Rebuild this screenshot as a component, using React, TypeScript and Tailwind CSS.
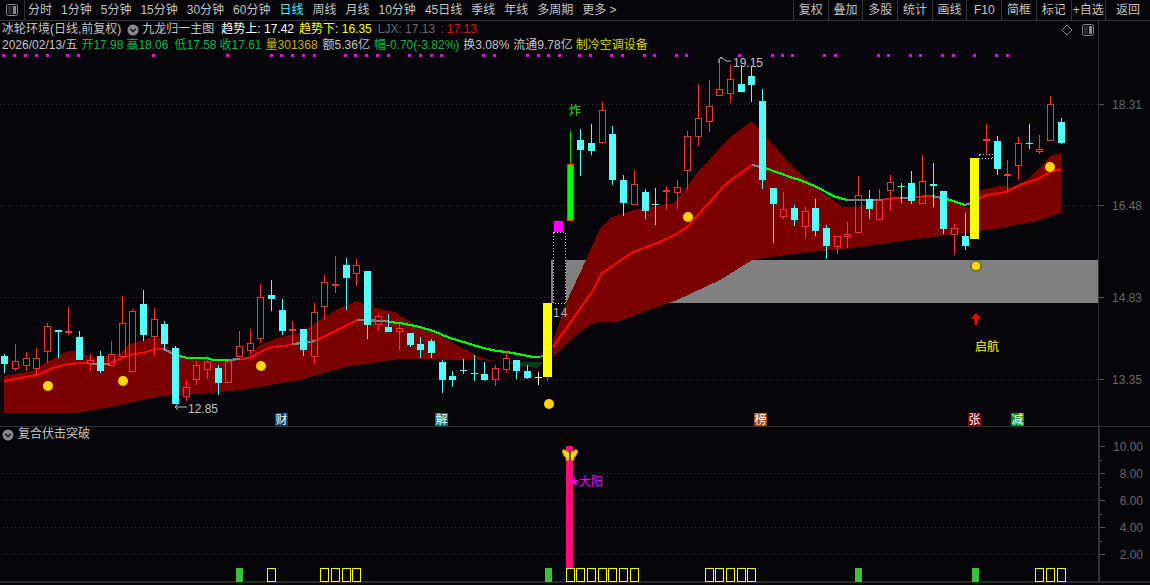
import React from 'react';

const FONT = "font-['Liberation_Sans','Noto_Sans_CJK_SC',sans-serif]";

const periods: [string, boolean?][] = [
  ['分时'], ['1分钟'], ['5分钟'], ['15分钟'], ['30分钟'], ['60分钟'], ['日线', true],
  ['周线'], ['月线'], ['10分钟'], ['45日线'], ['季线'], ['年线'], ['多周期'], ['更多 >'],
];
const tools = ['复权', '叠加', '多股', '统计', '画线', 'F10', '简框', '标记', '+自选'];

type Candle = [number, number, number, number, 'r' | 'c' | 'w' | 'y' | 'm' | 'g'];

// high, body top, body bottom, low, kind -- page y coordinates
const candles: Candle[] = [
  [354, 356, 364, 373, 'c'], [344, 361, 369, 371, 'r'], [352, 358, 366, 371, 'r'], [348, 358, 369, 377, 'r'],
  [323, 326, 352, 363, 'r'], [330, 330, 332, 358, 'c'], [307, 331, 333, 335, 'r'], [331, 337, 360, 360, 'c'],
  [354, 360, 364, 371, 'r'], [351, 356, 371, 373, 'c'], [341, 354, 366, 366, 'r'], [296, 323, 357, 357, 'r'],
  [309, 311, 372, 373, 'r'], [290, 304, 335, 341, 'c'], [308, 319, 337, 356, 'r'], [321, 324, 344, 350, 'c'],
  [346, 348, 404, 404, 'c'], [380, 387, 397, 401, 'r'], [361, 365, 380, 385, 'r'], [356, 361, 370, 379, 'r'],
  [365, 368, 383, 395, 'c'], [361, 361, 383, 383, 'r'], [331, 346, 357, 357, 'r'], [329, 343, 351, 354, 'r'],
  [284, 297, 339, 343, 'r'], [280, 295, 299, 311, 'c'], [299, 310, 331, 335, 'c'], [321, 329, 331, 344, 'r'],
  [329, 329, 350, 356, 'c'], [303, 312, 357, 364, 'r'], [275, 282, 307, 319, 'r'], [256, 284, 286, 293, 'r'],
  [258, 265, 278, 310, 'c'], [259, 265, 274, 286, 'r'], [271, 271, 325, 339, 'c'], [314, 316, 325, 331, 'r'],
  [314, 327, 332, 332, 'c'], [324, 328, 332, 350, 'r'], [333, 333, 345, 347, 'c'], [337, 344, 350, 358, 'c'],
  [339, 341, 353, 358, 'c'], [360, 362, 380, 393, 'c'], [371, 376, 380, 387, 'c'], [359, 370, 371, 374, 'c'],
  [355, 373, 374, 381, 'c'], [362, 374, 380, 381, 'c'], [365, 368, 380, 386, 'r'], [351, 358, 370, 373, 'r'],
  [360, 360, 371, 379, 'c'], [365, 371, 378, 379, 'c'], [372, 377, 378, 385, 'w'], [303, 303, 377, 381, 'y'],
  [221, 221, 232, 232, 'm'], [131, 164, 221, 221, 'g'], [129, 140, 150, 176, 'c'], [124, 143, 151, 155, 'c'],
  [102, 110, 143, 144, 'r'], [126, 134, 180, 185, 'c'], [175, 180, 203, 216, 'c'], [170, 184, 205, 205, 'r'],
  [189, 192, 211, 219, 'c'], [188, 204, 205, 225, 'c'], [186, 190, 192, 210, 'r'], [180, 187, 193, 209, 'r'],
  [131, 136, 171, 190, 'r'], [84, 118, 137, 146, 'r'], [80, 106, 122, 132, 'r'], [60, 89, 96, 96, 'r'],
  [65, 79, 94, 103, 'r'], [65, 84, 92, 92, 'c'], [66, 76, 85, 102, 'c'], [89, 101, 180, 189, 'c'],
  [188, 188, 204, 243, 'c'], [192, 209, 217, 219, 'r'], [205, 208, 220, 226, 'c'], [207, 211, 227, 238, 'r'],
  [199, 208, 231, 236, 'c'], [225, 228, 246, 259, 'c'], [236, 236, 247, 254, 'r'], [222, 234, 237, 248, 'r'],
  [176, 195, 233, 233, 'r'], [190, 199, 209, 219, 'c'], [189, 200, 220, 220, 'r'], [175, 182, 191, 211, 'r'],
  [183, 186, 187, 203, 'c'], [171, 183, 201, 204, 'c'], [155, 181, 204, 204, 'r'], [163, 184, 186, 207, 'c'],
  [191, 191, 229, 234, 'c'], [224, 228, 235, 255, 'r'], [213, 236, 246, 250, 'c'], [158, 158, 239, 239, 'y'],
  [124, 139, 141, 154, 'r'], [136, 141, 169, 175, 'c'], [160, 174, 176, 191, 'r'], [137, 143, 166, 180, 'r'],
  [124, 143, 144, 149, 'c'], [135, 149, 152, 154, 'r'], [96, 104, 141, 141, 'r'], [118, 122, 143, 144, 'c'],
];

const cx = (i: number) => Math.round(4.3 + 10.67 * i);

const pts = (p: number[][]) => p.map((a) => a.join(',')).join(' ');

const leftRibbon = [
  [4, 376], [20, 373], [33, 371], [45, 363], [60, 355], [68, 351], [75, 351], [85, 355], [100, 358], [120, 353], [130, 344],
  [150, 338], [160, 338], [170, 350], [185, 357], [205, 362], [225, 362], [245, 358], [260, 345], [280, 337], [300, 333],
  [320, 320], [340, 308], [357, 301], [372, 307], [395, 312], [415, 325], [430, 330], [445, 338], [460, 347], [480, 357],
  [490, 360], [505, 362], [505, 362], [480, 360], [400, 359], [350, 366], [320, 374], [300, 380], [270, 385], [240, 390],
  [200, 394], [160, 396], [130, 403], [100, 409], [75, 413], [4, 413],
];
const greenSliver = [[505, 362], [543, 362], [537, 368], [522, 366]];
const rightRibbon = [
  [553, 340], [563, 313], [566, 303], [586, 260], [600, 228], [610, 218], [633, 210], [673, 203], [678, 198], [697, 173],
  [730, 137], [752, 121], [763, 133], [793, 167], [810, 182], [823, 193], [843, 207], [857, 207], [880, 200], [907, 200],
  [933, 197], [947, 200], [963, 205], [971, 210], [980, 190], [1000, 186], [1012, 187], [1027, 180], [1040, 168], [1050, 156],
  [1061, 153], [1061, 213], [1033, 222], [1000, 228], [967, 233], [933, 237], [880, 244], [847, 249], [810, 252], [763, 258],
  [752, 260], [720, 280], [677, 300], [630, 317], [618, 322], [598, 322], [590, 325], [570, 340], [553, 358],
];

const lines: [string, number[][]][] = [
  ['#ff0000', [[4, 381], [20, 378], [37, 375], [53, 368], [68, 364], [80, 363], [90, 363]]],
  ['#808080', [[90, 364], [110, 364]]],
  ['#ff0000', [[110, 363], [133, 354], [143, 353], [155, 349], [163, 349]]],
  ['#808080', [[163, 349], [172, 353], [180, 356]]],
  ['#00ff00', [[180, 356], [187, 358], [207, 358], [213, 360], [228, 360]]],
  ['#808080', [[228, 360], [240, 359]]],
  ['#ff0000', [[240, 359], [250, 358], [260, 352], [272, 347], [292, 345]]],
  ['#808080', [[292, 344], [303, 343], [315, 341]]],
  ['#ff0000', [[315, 341], [340, 329], [357, 320]]],
  ['#808080', [[357, 320], [388, 321]]],
  ['#00ff00', [[388, 322], [400, 323], [420, 327], [433, 331], [450, 338], [470, 344], [483, 348], [497, 351], [507, 352], [523, 355], [533, 357], [540, 357]]],
  ['#808080', [[540, 357], [544, 355]]],
  ['#ff0000', [[553, 347], [572, 320], [592, 292], [602, 273], [633, 252], [657, 243], [675, 235], [687, 227], [727, 183], [752, 165]]],
  ['#808080', [[752, 165], [765, 168]]],
  ['#00ff00', [[765, 168], [793, 178], [800, 180], [817, 187], [833, 196], [847, 200]]],
  ['#808080', [[847, 200], [883, 200]]],
  ['#ff0000', [[883, 199], [900, 198]]],
  ['#808080', [[900, 198], [915, 198]]],
  ['#ff0000', [[915, 197], [932, 196]]],
  ['#808080', [[932, 196], [947, 199]]],
  ['#00ff00', [[947, 199], [965, 205]]],
  ['#808080', [[965, 205], [971, 203]]],
  ['#ff0000', [[971, 203], [980, 198], [987, 195], [1007, 192], [1020, 185], [1038, 179], [1050, 172], [1061, 169]]],
];

const coins = [[48, 386], [123, 381], [261, 366], [549, 404], [688, 217], [976, 266], [1050, 167]];

const magentaDots = [
  3, 14, 25, 36, 47, 67, 78, 153, 227, 271, 281, 292, 303, 314, 345, 355, 366, 377, 388, 409, 420, 431, 441, 483, 494, 527,
  538, 548, 559, 579, 590, 611, 622, 644, 654, 676, 686, 739, 772, 782, 792, 824, 835, 878, 888, 910, 920, 942, 953, 974,
  996, 1007,
];

const tags: [number, string, string][] = [
  [275, '财', '#0b3a6b'],
  [435, '解', '#0b6f68'],
  [754, '榜', '#a04a08'],
  [968, '张', '#800000'],
  [1011, '减', '#0a8a14'],
];

function CandleMark({ c, i }: { c: Candle; i: number }) {
  const [high, top, bottom, low, kind] = c;
  const x = cx(i);
  const left = x - 3;
  if (kind === 'y' || kind === 'm') {
    return (
      <>
        <rect x={x - 1} y={top} width={1} height={low - top} fill="#ff3232" />
        <rect x={x - 5} y={top} width={9} height={bottom - top} fill={kind === 'y' ? '#ffff00' : '#ff00ff'} />
      </>
    );
  }
  if (kind === 'g') {
    return (
      <>
        <rect x={x} y={high} width={1} height={top - high} fill="#00e000" />
        <rect x={left} y={top} width={7} height={bottom - top} fill="#ff3232" />
        <rect x={left + 1} y={top + 1} width={5} height={bottom - top - 2} fill="#00ff00" />
      </>
    );
  }
  const color = kind === 'r' ? '#ff3232' : kind === 'w' ? '#ffffff' : '#54ffff';
  const doji = bottom - top <= 1;
  return (
    <>
      <rect x={x} y={high} width={1} height={Math.max(top - high, 0)} fill={color} />
      <rect x={x} y={bottom} width={1} height={Math.max(low - bottom, 0)} fill={color} />
      {doji ? (
        <rect x={left} y={top} width={7} height={1} fill={color} />
      ) : kind === 'r' ? (
        <rect x={left + 0.5} y={top + 0.5} width={6} height={bottom - top - 1} fill="none" stroke={color} />
      ) : (
        <rect x={left} y={top} width={7} height={bottom - top} fill={color} />
      )}
    </>
  );
}

function Butterfly() {
  return (
    <g>
      <g stroke="#b87c18" strokeWidth="1" fill="#f4d818">
        <path d="M569.5 452.5 L564 449.5 L562 451 L564 456 L566 457.5 L566 460.5 L569.5 460 Z" />
        <path d="M570.5 452.5 L576 449.5 L578 451 L576 456 L574 457.5 L574 460.5 L570.5 460 Z" />
      </g>
      <rect x="569.5" y="451" width="1" height="9" fill="#2a1a08" />
    </g>
  );
}

function MainChart() {
  return (
    <svg viewBox="0 53 1098 373" width={1098} height={373} className={`block ${FONT}`}>
      {[104, 205, 297, 379].map((y) => (
        <line key={y} x1="0" x2="1098" y1={y + 0.5} y2={y + 0.5} stroke="#333333" strokeDasharray="1 3" />
      ))}
      <g shapeRendering="crispEdges">
        <rect x="551" y="260" width="547" height="43" fill="#808080" />
        <rect x="553" y="232" width="13" height="71" fill="#05050a" />
        <polygon points={pts(leftRibbon)} fill="#7a0000" />
        <polygon points={pts(greenSliver)} fill="#0f3b12" />
        <polygon points={pts(rightRibbon)} fill="#7a0000" />
        {lines.map(([color, p], i) => (
          <polyline key={i} points={pts(p)} fill="none" stroke={color} strokeWidth="2.2" />
        ))}
        {magentaDots.map((x) => (
          <rect key={x} x={x - 1} y={54} width={3} height={3} fill="#ff00ff" />
        ))}
        <rect x="553.5" y="232.5" width="12" height="71" fill="none" stroke="#d0d0d0" strokeDasharray="1 2" />
        <rect x="979.5" y="154.5" width="13" height="4" fill="none" stroke="#d0d0d0" strokeDasharray="1 2" />
        {candles.map((c, i) => (
          <CandleMark key={i} c={c} i={i} />
        ))}
      </g>
      {coins.map(([x, y]) => (
        <circle key={x} cx={x} cy={y} r={5} fill="#ffd700" stroke={y === 266 ? '#5a4a10' : 'none'} />
      ))}
      <path d="M976 313 l-5 6 h3.5 v6 h3 v-6 h3.5 z" fill="#ff0000" />
      <text x="569" y="115" fontSize="12" fill="#30e030">炸</text>
      <text x="553" y="317" fontSize="12" fill="#b0b0b0" letterSpacing="1">14</text>
      <text x="733" y="67" fontSize="12" fill="#c0c0c0">19.15</text>
      <path d="M719 63 v-4 l3 -2 M720 58 h2 l4 3 h5" fill="none" stroke="#c0c0c0" />
      <text x="188" y="413" fontSize="12" fill="#c0c0c0">12.85</text>
      <path d="M175 407 h12 M175 407 l3 -3 M175 407 l3 3" fill="none" stroke="#c0c0c0" />
      <text x="975" y="351" fontSize="12" fill="#ffff20">启航</text>
      {tags.map(([x, t, bg]) => (
        <g key={t}>
          <rect x={x} y={413} width={13} height={13} fill={bg} />
          <text x={x + 0.5} y={424} fontSize="12" fill="#ffffff">{t}</text>
        </g>
      ))}
    </svg>
  );
}

function LowerChart() {
  const yellow = [25, 30, 31, 32, 33, 53, 54, 55, 56, 57, 58, 59, 66, 67, 68, 69, 70, 97, 98, 99];
  const green = [22, 51, 80, 91];
  return (
    <svg viewBox="0 442 1098 141" width={1098} height={141} className={`block ${FONT}`}>
      {[473, 500, 527, 554].map((y) => (
        <line key={y} x1="3" x2="1098" y1={y + 0.5} y2={y + 0.5} stroke="#333333" strokeDasharray="1 3" />
      ))}
      <g shapeRendering="crispEdges">
        <rect x="566" y="446" width="7" height="122" fill="#ff0a78" />
        {green.map((i) => (
          <rect key={i} x={cx(i) - 3} y={568} width={7} height={14} fill="#3fbf3f" />
        ))}
        {yellow.map((i) => (
          <rect key={i} x={cx(i) - 4 + 0.5} y={568.5} width={8} height={13} fill="none" stroke="#ffff00" />
        ))}
      </g>
      <Butterfly />
      <polygon
        points="574.5,477 575.6,480.2 579,480.2 576.3,482.2 577.3,485.5 574.5,483.5 571.7,485.5 572.7,482.2 570,480.2 573.4,480.2"
        fill="#ff00ff"
      />
      <text x="579" y="486" fontSize="12" fill="#ff00ff">大阳</text>
    </svg>
  );
}

function Axis({ labels, minor, top, height }: { labels: [string, number][]; minor: number[]; top: number; height: number }) {
  return (
    <svg viewBox={`1100 ${top} 50 ${height}`} width={50} height={height} className={`block ${FONT}`}>
      {labels.map(([t, y]) => (
        <g key={t}>
          <rect x="1100" y={y} width="5" height="1" fill="#555555" shapeRendering="crispEdges" />
          <text x="1143" y={y + 5} textAnchor="end" fontSize="12" fill="#686868">{t}</text>
        </g>
      ))}
      {minor.map((y) => (
        <rect key={y} x="1100" y={y} width="2" height="1" fill="#555555" shapeRendering="crispEdges" />
      ))}
    </svg>
  );
}

function Chevron() {
  return (
    <svg viewBox="0 0 12 12" className="w-3 h-3 shrink-0">
      <circle cx="6" cy="6" r="5.5" fill="#8a8a8a" />
      <path d="M3.2 4.8 L6 7.6 L8.8 4.8" fill="none" stroke="#1a1a1a" strokeWidth="1.5" />
    </svg>
  );
}

function PanelIcon({ className }: { className: string }) {
  return (
    <svg viewBox="0 0 12 12" className={className}>
      <rect x="0.5" y="0.5" width="11" height="11" rx="2" fill="none" stroke="#8a8a8a" />
      <rect x="7" y="2" width="3" height="8" fill="#8a8a8a" />
      <rect x="2" y="2" width="4" height="8" fill="#2a2a2a" />
    </svg>
  );
}

export default function App() {
  return (
    <div className={`w-[1150px] h-[585px] bg-[#05050a] text-[12px] leading-[15px] text-[#c4c4c4] overflow-hidden ${FONT}`}>
      <div className="flex h-[21px] border-b border-[#333333]">
        <div className="w-[25px] flex items-center justify-center border-r border-[#333333]">
          <PanelIcon className="w-[12px] h-[12px]" />
        </div>
        <div className="flex items-center gap-[9px] pl-[3px] w-[768px]">
          {periods.map(([p, active]) => (
            <span key={p} className={active ? 'text-[#4ff0ff]' : ''}>{p}</span>
          ))}
        </div>
        <div className="flex flex-1">
          {tools.map((t) => (
            <div key={t} className="w-[34.7px] flex items-center justify-center border-l border-[#333333]">{t}</div>
          ))}
          <div className="flex-1 flex items-center justify-center border-l border-[#333333]">返回</div>
        </div>
      </div>

      <div className="flex h-[406px] border-b border-[#333333]">
        <div className="w-[1098px]">
          <div className="flex items-center h-[16px] pt-[1px] pl-[2px]">
            <span>冰轮环境(日线,前复权)</span>
            <span className="ml-[6px]"><Chevron /></span>
            <span className="ml-[3px]">九龙归一主图</span>
            <span className="ml-[7px] text-white">趋势上: 17.42</span>
            <span className="ml-[5px] text-[#ffff20]">趋势下: 16.35</span>
            <span className="ml-[6px] text-[#6a6a6a]">LJX: 17.13</span>
            <span className="ml-[5px] text-[#e01010]">: 17.13</span>
            <svg viewBox="0 0 12 12" className="w-3 h-3 ml-auto">
              <path d="M6 1 L11 6 L6 11 L1 6 Z" fill="none" stroke="#8a8a8a" />
            </svg>
            <PanelIcon className="w-[12px] h-[12px] ml-[9px] mr-[4px]" />
          </div>
          <div className="flex items-center h-[16px] pl-[2px]">
            <span>2026/02/13/五</span>
            <span className="ml-[4px] text-[#10b84c]">开17.98</span>
            <span className="ml-[3px] text-[#10b84c]">高18.06</span>
            <span className="ml-[6px] text-[#10b84c]">低17.58</span>
            <span className="ml-[3px] text-[#10b84c]">收17.61</span>
            <span className="ml-[4px] text-[#c8b020]">量301368</span>
            <span className="ml-[5px]">额5.36亿</span>
            <span className="ml-[4px] text-[#10b84c]">幅-0.70(-3.82%)</span>
            <span className="ml-[4px]">换3.08%</span>
            <span className="ml-[4px]">流通9.78亿</span>
            <span className="ml-[3px] text-[#d8d820]">制冷空调设备</span>
          </div>
          <MainChart />
        </div>
        <div className="flex-1 border-l border-[#333333] pt-[32px]">
          <Axis top={53} height={373} minor={[]} labels={[['18.31', 104], ['16.48', 205], ['14.83', 297], ['13.35', 379]]} />
        </div>
      </div>

      <div className="flex h-[156px] border-b-2 border-[#2a2a2a]">
        <div className="w-[1098px]">
          <div className="flex items-center gap-[4px] h-[15px] pl-[2px]">
            <Chevron />
            <span>复合伏击突破</span>
          </div>
          <LowerChart />
        </div>
        <div className="flex-1 border-l-2 border-[#333333]">
          <Axis
            top={427}
            height={154}
            minor={[460, 487, 514, 541]}
            labels={[['10.00', 446], ['8.00', 473], ['6.00', 500], ['4.00', 527], ['2.00', 554]]}
          />
        </div>
      </div>
    </div>
  );
}
